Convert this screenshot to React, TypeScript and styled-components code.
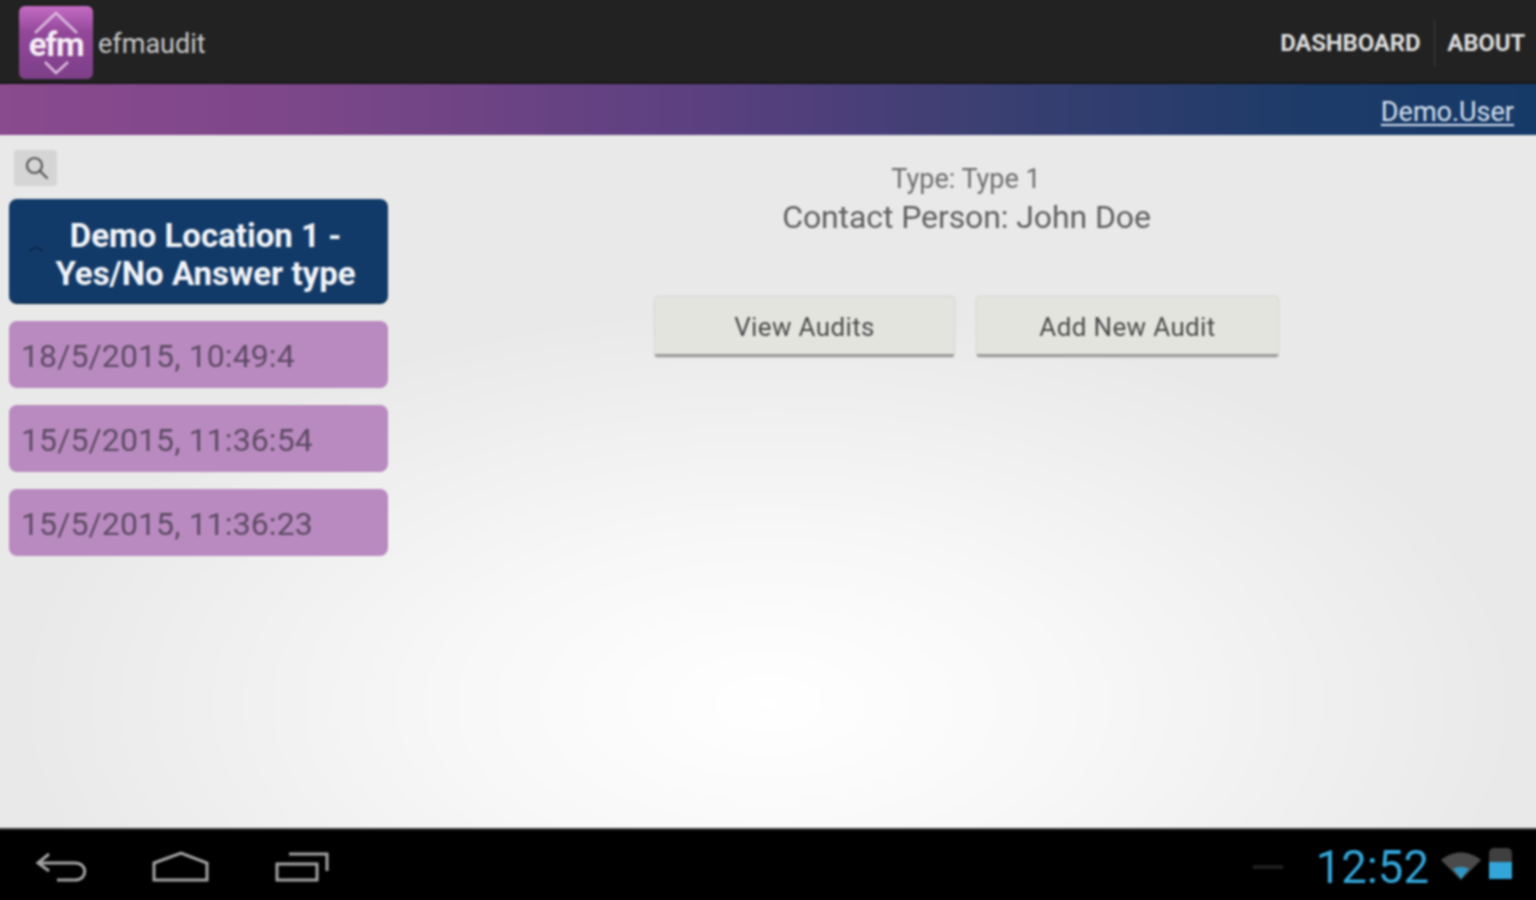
import styled, { createGlobalStyle } from 'styled-components';

const audits = ['18/5/2015, 10:49:4', '15/5/2015, 11:36:54', '15/5/2015, 11:36:23'];

const GlobalStyle = createGlobalStyle`
  html, body {
    margin: 0;
    padding: 0;
    height: 100%;
    overflow: hidden;
    background: #000;
  }
  * {
    box-sizing: border-box;
  }
`;

const App = () => {
  return (
    <Screen>
      <GlobalStyle />
      <ActionBar>
        <Brand>
          <Logo>
            <LogoMark viewBox="0 0 74 73">
              <path d="M16 27 L37 7 L58 27" />
              <path d="M26 56 L37 67 L49 56" />
            </LogoMark>
            <LogoText>efm</LogoText>
          </Logo>
          <BrandName>efmaudit</BrandName>
        </Brand>
        <ActionMenu>
          <ActionItem>DASHBOARD</ActionItem>
          <ActionDivider />
          <ActionItem>ABOUT</ActionItem>
        </ActionMenu>
      </ActionBar>
      <UserBar>
        <UserLink>Demo.User</UserLink>
      </UserBar>
      <Content>
        <Sidebar>
          <SearchButton>
            <svg width="26" height="26" viewBox="0 0 26 26" fill="none" stroke="#555" strokeWidth="2.2">
              <circle cx="11.5" cy="10.5" r="7.5" />
              <path d="M17 16 L24 23" strokeLinecap="round" />
            </svg>
          </SearchButton>
          <LocationCard>
            <CardChevron width="16" height="6" viewBox="0 0 16 6" fill="none" stroke="#0b2744" strokeWidth="1.5">
              <path d="M1 5 L8 1 L15 5" />
            </CardChevron>
            Demo Location 1 -
            <br />
            Yes/No Answer type
          </LocationCard>
          <AuditList>
            {audits.map((audit) => (
              <AuditItem key={audit}>{audit}</AuditItem>
            ))}
          </AuditList>
        </Sidebar>
        <Details>
          <TypeLine>Type: Type 1</TypeLine>
          <ContactLine>Contact Person: John Doe</ContactLine>
          <ButtonRow>
            <ActionButton $width={299}>View Audits</ActionButton>
            <ActionButton $width={301}>Add New Audit</ActionButton>
          </ButtonRow>
        </Details>
      </Content>
      <NavBar>
        <NavButtons>
          <svg width="52" height="32" viewBox="0 0 52 32" fill="none" stroke="#a3a3a3" strokeWidth="3">
            <path d="M14 3 L3 12 L14 20 M3 12 H40 C53 12 53 29 40 29 H22" />
          </svg>
          <svg width="58" height="32" viewBox="0 0 58 32" fill="none" stroke="#a3a3a3" strokeWidth="3">
            <path d="M2 12 L29 2 L55 12 V29 H2 Z" />
          </svg>
          <svg width="54" height="32" viewBox="0 0 54 32" fill="none" stroke="#a3a3a3" strokeWidth="3">
            <rect x="2" y="13" width="40" height="16" />
            <path d="M14 3 H52 V20" />
          </svg>
        </NavButtons>
        <StatusArea>
          <StatusDash />
          <Clock>12:52</Clock>
          <WifiIcon width="40" height="28" viewBox="0 0 40 28">
            <path d="M0 8 C12 -2 28 -2 40 8 L20 28 Z" fill="#4a4a4a" />
            <path d="M12 17 C17 14 23 14 28 17 L20 27 Z" fill="#2f95c4" />
          </WifiIcon>
          <Battery>
            <BatteryLevel />
          </Battery>
        </StatusArea>
      </NavBar>
    </Screen>
  );
};

// the soft look of the capture is a blur; the page runs 4px past each window edge so it doesn't fade at the sides
const Screen = styled.div`
  display: flex;
  flex-direction: column;
  width: 1544px;
  height: 908px;
  margin: -4px;
  font-family: Roboto, 'Liberation Sans', sans-serif;
  filter: blur(0.8px);
`;

const ActionBar = styled.div`
  display: flex;
  align-items: center;
  justify-content: space-between;
  height: 88px;
  padding: 7px 15px 0 23px;
  background: #222222;
  border-bottom: 2px solid #161616;
`;

const Brand = styled.div`
  display: flex;
  align-items: center;
  gap: 5px;
`;

const Logo = styled.div`
  position: relative;
  display: flex;
  align-items: center;
  justify-content: center;
  width: 74px;
  height: 73px;
  border-radius: 6px;
  background: linear-gradient(180deg, #c56cc4 0%, #93489a 35%, #7d3f88 100%);
`;

const LogoMark = styled.svg`
  position: absolute;
  inset: 0;
  width: 74px;
  height: 73px;
  fill: none;
  stroke: #dcbadf;
  stroke-width: 2.5;
`;

const LogoText = styled.span`
  position: relative;
  padding-top: 3px;
  font-size: 33px;
  font-weight: 700;
  letter-spacing: -1.2px;
  color: #f6eef6;
`;

const BrandName = styled.span`
  padding-top: 3px;
  font-size: 27px;
  color: #c8c8c8;
`;

const ActionMenu = styled.div`
  display: flex;
  align-items: center;
`;

const ActionItem = styled.span`
  font-size: 24px;
  font-weight: 700;
  letter-spacing: -0.2px;
  color: #dcdcdc;
`;

const ActionDivider = styled.div`
  width: 1px;
  height: 46px;
  margin: 0 12px 0 14px;
  background: #3d3d3d;
`;

const UserBar = styled.div`
  display: flex;
  align-items: center;
  justify-content: flex-end;
  height: 51px;
  padding: 4px 26px 0 0;
  background: linear-gradient(90deg, #8a4a8e 0%, #7c4789 20%, #5c4080 45%, #3a3f72 65%, #1d3b68 85%, #163a68 100%);
`;

const UserLink = styled.span`
  font-size: 27px;
  color: #d6e0ee;
  text-decoration: underline;
  text-underline-offset: 3px;
`;

const Content = styled.div`
  flex: 1;
  display: flex;
  min-height: 0;
  background: radial-gradient(ellipse 760px 400px at 50% 82%, #ffffff 0%, #f8f8f8 40%, #e9e9e9 100%);
`;

const Sidebar = styled.div`
  display: flex;
  flex-direction: column;
  width: 400px;
  padding: 15px 8px 0 13px;
`;

const SearchButton = styled.div`
  display: flex;
  align-items: center;
  justify-content: center;
  width: 43px;
  height: 36px;
  margin-left: 5px;
  border-radius: 3px;
  background: #d5d5d5;
`;

const LocationCard = styled.div`
  position: relative;
  height: 105px;
  margin-top: 13px;
  padding: 18px 0 0 14px;
  border-radius: 8px;
  background: #123a68;
  border-bottom: 2px solid #0d2c50;
  text-align: center;
  font-size: 33px;
  font-weight: 700;
  line-height: 38px;
  color: #f2f4f7;
`;

const CardChevron = styled.svg`
  position: absolute;
  left: 19px;
  top: 47px;
`;

const AuditList = styled.div`
  display: flex;
  flex-direction: column;
  gap: 17px;
  margin-top: 17px;
`;

const AuditItem = styled.div`
  display: flex;
  align-items: center;
  height: 67px;
  padding: 3px 0 0 12px;
  border-radius: 8px;
  background: #b98ac0;
  font-size: 32px;
  letter-spacing: 0.1px;
  color: #5d4a63;
`;

const Details = styled.div`
  flex: 1;
  display: flex;
  flex-direction: column;
  align-items: center;
  padding: 26px 4px 0 0;
`;

const TypeLine = styled.div`
  font-size: 27px;
  line-height: 36px;
  color: #6e6e6e;
`;

const ContactLine = styled.div`
  padding-left: 1px;
  font-size: 32px;
  line-height: 40px;
  letter-spacing: -0.1px;
  color: #5f5f5f;
`;

const ButtonRow = styled.div`
  display: flex;
  gap: 23px;
  margin-top: 60px;
`;

const ActionButton = styled.div<{ $width: number }>`
  display: flex;
  align-items: center;
  justify-content: center;
  width: ${({ $width }) => $width}px;
  height: 60px;
  padding: 3px 0 0 1px;
  border-radius: 2px;
  background: #e4e4df;
  border-bottom: 3px solid #9c9c9c;
  box-shadow: 0 0 2px rgba(0, 0, 0, 0.3);
  font-size: 26px;
  letter-spacing: 0.35px;
  color: #4a4a4a;
`;

const NavBar = styled.div`
  display: flex;
  align-items: center;
  justify-content: space-between;
  height: 76px;
  padding: 0 28px 0 39px;
  background: #000000;
  border-top: 2px solid #3a3a3a;
`;

const NavButtons = styled.div`
  display: flex;
  align-items: center;
  gap: 65px;
`;

const StatusArea = styled.div`
  display: flex;
  align-items: center;
`;

const StatusDash = styled.div`
  width: 30px;
  height: 4px;
  margin-right: 33px;
  background: #1e1e1e;
`;

const Clock = styled.span`
  font-size: 45.5px;
  color: #33a5d8;
  margin-right: 12px;
`;

const WifiIcon = styled.svg`
  margin-bottom: 2px;
`;

const Battery = styled.div`
  display: flex;
  align-items: flex-end;
  width: 23px;
  height: 31px;
  margin: 0 0 7px 8px;
  border-radius: 5px 5px 0 0;
  background: #3f3f3f;
`;

const BatteryLevel = styled.div`
  width: 100%;
  height: 17px;
  background: #33a5d8;
`;

export default App;
